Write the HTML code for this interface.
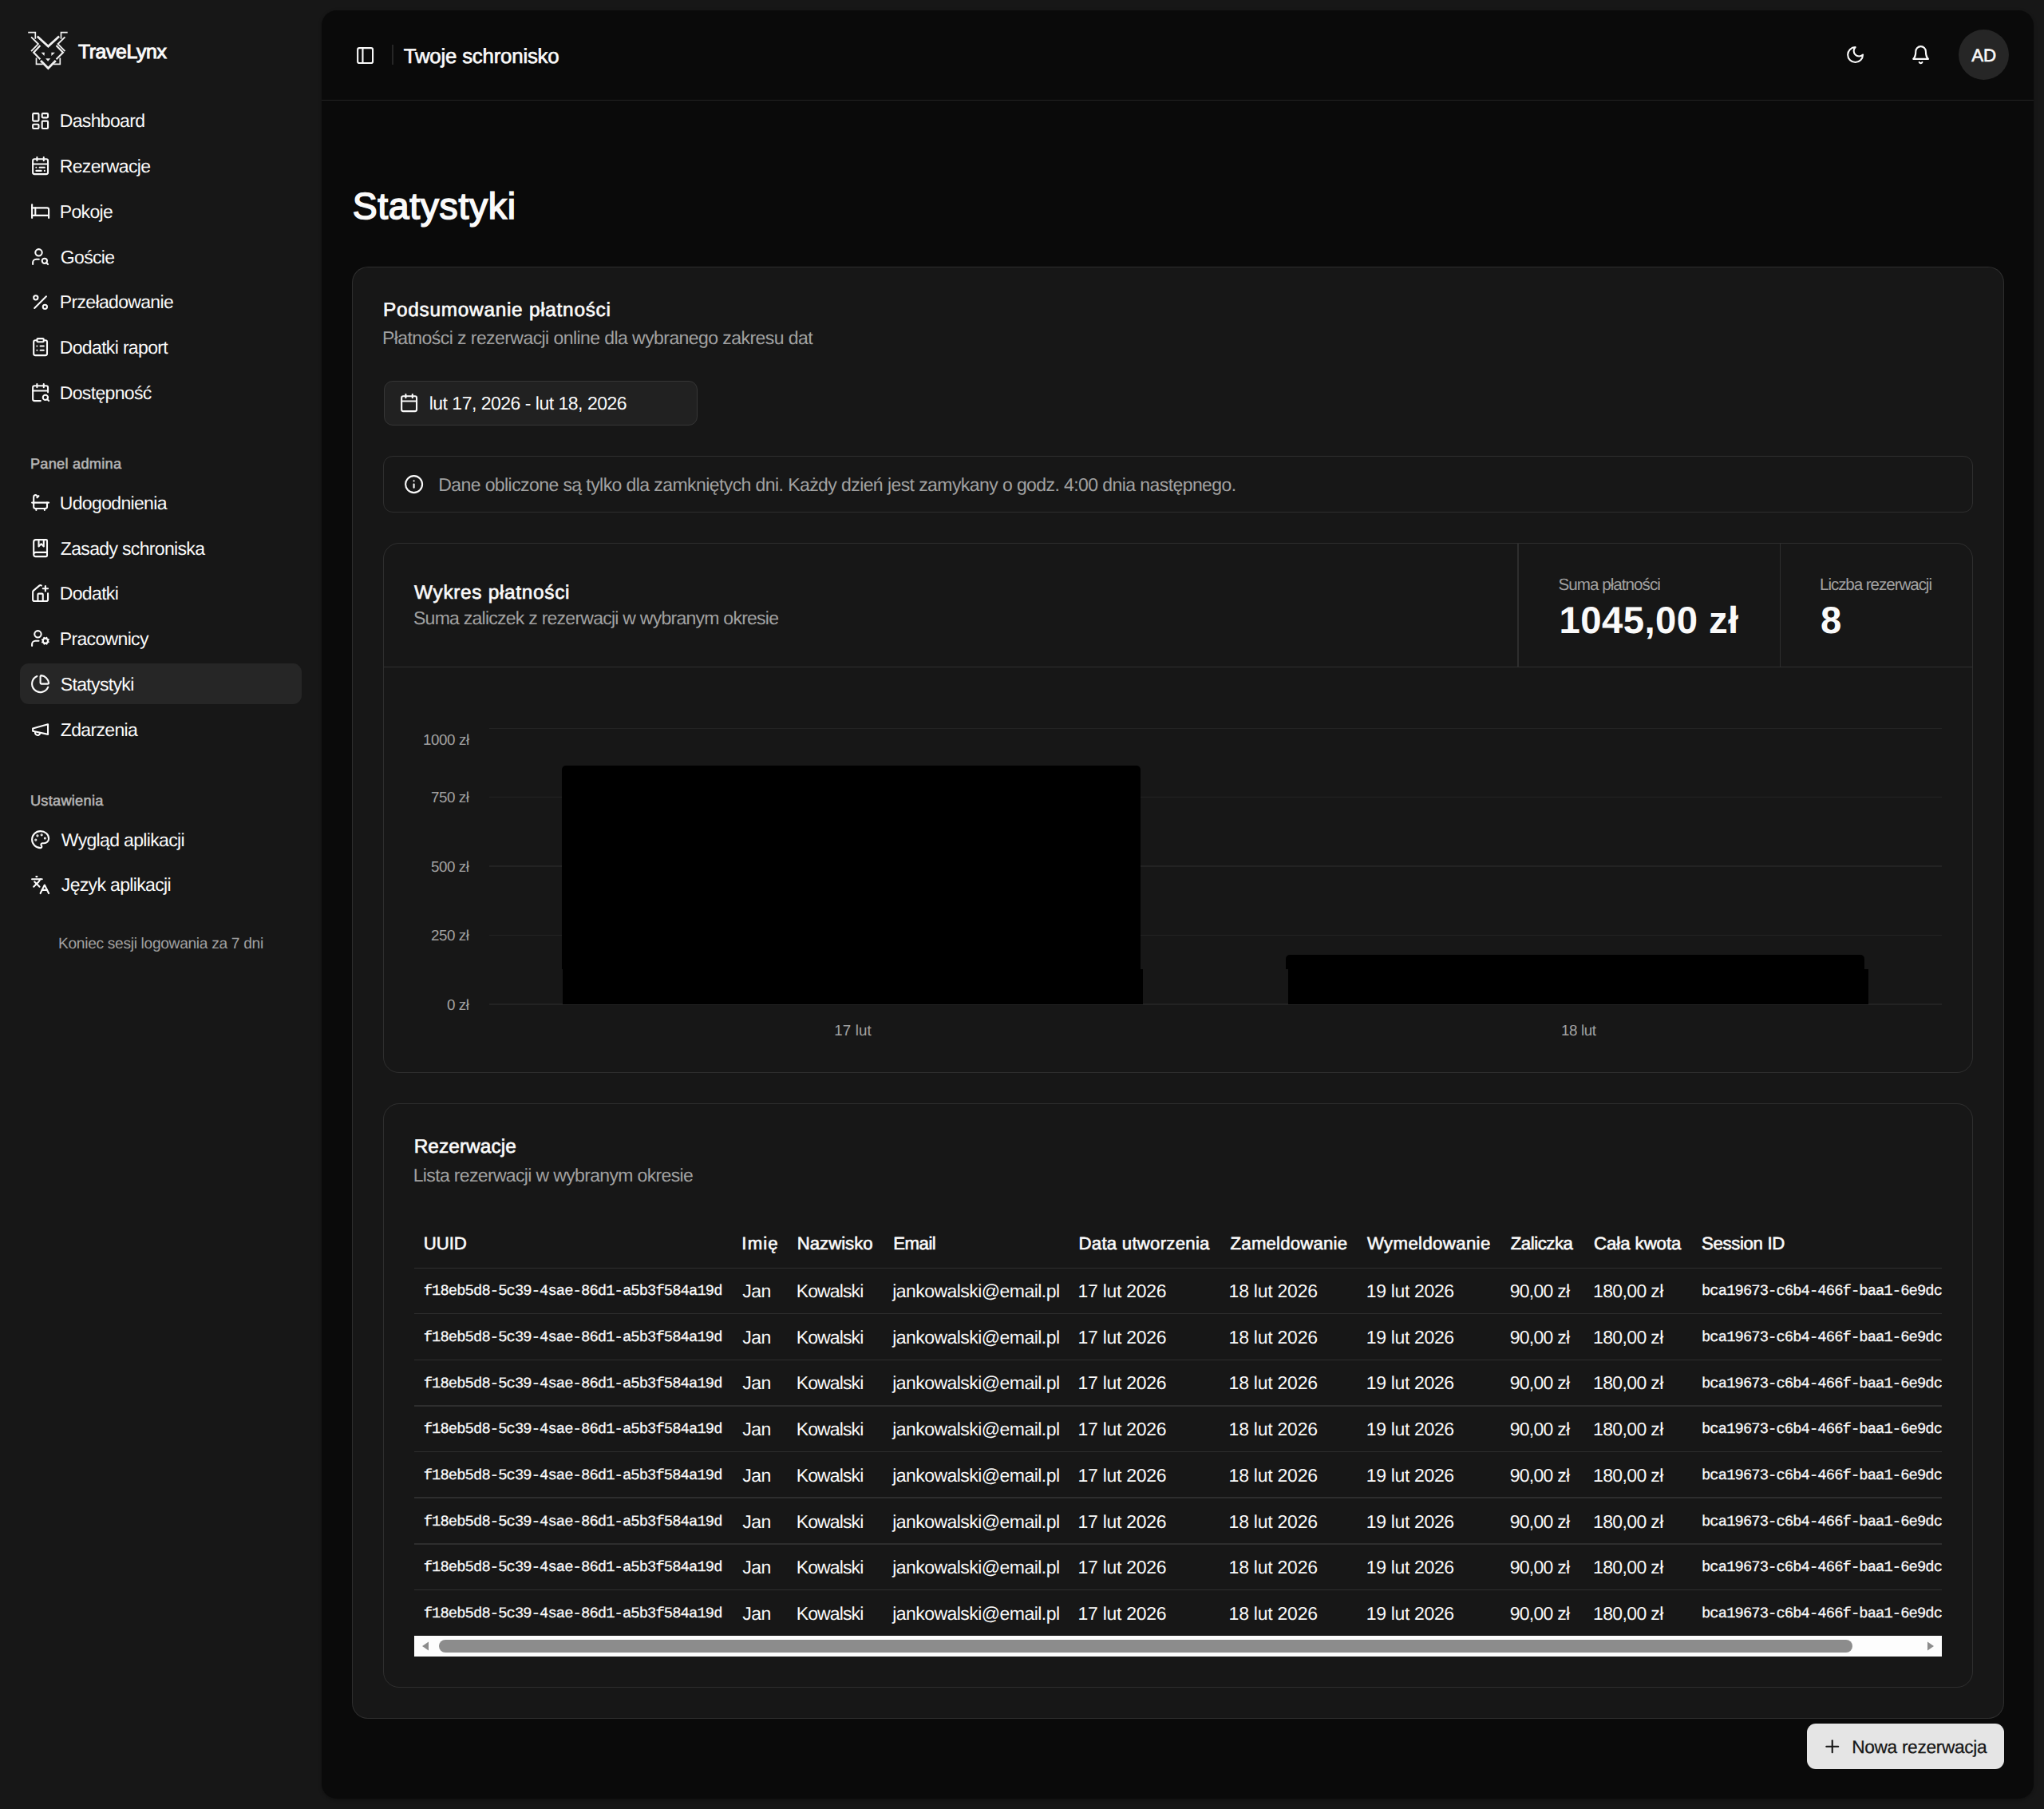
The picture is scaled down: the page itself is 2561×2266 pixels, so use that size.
<!DOCTYPE html>
<html lang="pl"><head><meta charset="utf-8"><title>Statystyki</title><style>
html,body{margin:0;padding:0}
body{width:2561px;height:2266px;background:#171717;position:relative;overflow:hidden;font-family:"Liberation Sans",sans-serif}
.b{position:absolute}
.ic{position:absolute;overflow:visible}
.t{position:absolute;white-space:nowrap;text-rendering:geometricPrecision}
.clipwrap{position:absolute;left:518.7px;top:1500px;width:1914.3px;height:600px;overflow:hidden}
</style></head>
<body>
<div class="b" style="left:403px;top:13px;width:2145.00px;height:2239.50px;background:#0a0a0a;border-radius:19px;box-shadow:0 1.5px 4px rgba(0,0,0,.3)"></div>
<div class="b" style="left:403px;top:124.5px;width:2145.00px;height:1.50px;background:#232323"></div>
<div class="b" style="left:491px;top:56px;width:2.00px;height:25.00px;background:#262626"></div>
<svg class="ic" style="left:445.15px;top:56.95px;width:25.2px;height:25.2px;color:#fafafa" viewBox="0 0 24 24" fill="none" stroke="currentColor" stroke-width="2" stroke-linecap="round" stroke-linejoin="round"><rect width="18" height="18" x="3" y="3" rx="2"/><path d="M9 3v18"/></svg>
<svg class="ic" style="left:2311.90px;top:55.60px;width:25.2px;height:25.2px;color:#fafafa" viewBox="0 0 24 24" fill="none" stroke="currentColor" stroke-width="2" stroke-linecap="round" stroke-linejoin="round"><path d="M12 3a6 6 0 0 0 9 9 9 9 0 1 1-9-9Z"/></svg>
<svg class="ic" style="left:2393.90px;top:55.75px;width:25.2px;height:25.2px;color:#fafafa" viewBox="0 0 24 24" fill="none" stroke="currentColor" stroke-width="2" stroke-linecap="round" stroke-linejoin="round"><path d="M6 8a6 6 0 0 1 12 0c0 7 3 9 3 9H3s3-2 3-9"/><path d="M10.3 21a1.94 1.94 0 0 0 3.4 0"/></svg>
<div class="b" style="left:2454px;top:37px;width:63.00px;height:63.00px;background:#262626;border-radius:50%"></div>
<div class="b" style="left:25px;top:831px;width:353.00px;height:51.00px;background:#262626;border-radius:11px"></div>
<svg class="ic" style="left:37.90px;top:138.90px;width:25.2px;height:25.2px;color:#fafafa" viewBox="0 0 24 24" fill="none" stroke="currentColor" stroke-width="2" stroke-linecap="round" stroke-linejoin="round"><rect width="7" height="9" x="3" y="3" rx="1"/><rect width="7" height="5" x="14" y="3" rx="1"/><rect width="7" height="9" x="14" y="12" rx="1"/><rect width="7" height="5" x="3" y="16" rx="1"/></svg>
<svg class="ic" style="left:37.90px;top:194.95px;width:25.2px;height:25.2px;color:#fafafa" viewBox="0 0 24 24" fill="none" stroke="currentColor" stroke-width="2" stroke-linecap="round" stroke-linejoin="round"><rect width="18" height="18" x="3" y="4" rx="2"/><path d="M16 2v4"/><path d="M3 10h18"/><path d="M8 2v4"/><path d="M17 14h-6"/><path d="M13 18H7"/><path d="M7 14h.01"/><path d="M17 18h.01"/></svg>
<svg class="ic" style="left:37.90px;top:251.80px;width:25.2px;height:25.2px;color:#fafafa" viewBox="0 0 24 24" fill="none" stroke="currentColor" stroke-width="2" stroke-linecap="round" stroke-linejoin="round"><path d="M2 4v16"/><path d="M2 8h18a2 2 0 0 1 2 2v10"/><path d="M2 17h20"/><path d="M6 8v9"/></svg>
<svg class="ic" style="left:37.90px;top:308.65px;width:25.2px;height:25.2px;color:#fafafa" viewBox="0 0 24 24" fill="none" stroke="currentColor" stroke-width="2" stroke-linecap="round" stroke-linejoin="round"><circle cx="10" cy="7" r="4"/><path d="M10.3 15H7a4 4 0 0 0-4 4v2"/><circle cx="17" cy="17" r="3"/><path d="m21 21-1.9-1.9"/></svg>
<svg class="ic" style="left:37.90px;top:365.50px;width:25.2px;height:25.2px;color:#fafafa" viewBox="0 0 24 24" fill="none" stroke="currentColor" stroke-width="2" stroke-linecap="round" stroke-linejoin="round"><line x1="19" x2="5" y1="5" y2="19"/><circle cx="6.5" cy="6.5" r="2.5"/><circle cx="17.5" cy="17.5" r="2.5"/></svg>
<svg class="ic" style="left:37.90px;top:422.35px;width:25.2px;height:25.2px;color:#fafafa" viewBox="0 0 24 24" fill="none" stroke="currentColor" stroke-width="2" stroke-linecap="round" stroke-linejoin="round"><rect width="8" height="4" x="8" y="2" rx="1" ry="1"/><path d="M16 4h2a2 2 0 0 1 2 2v14a2 2 0 0 1-2 2H6a2 2 0 0 1-2-2V6a2 2 0 0 1 2-2h2"/><path d="M12 11h4"/><path d="M12 16h4"/><path d="M8 11h.01"/><path d="M8 16h.01"/></svg>
<svg class="ic" style="left:37.90px;top:479.20px;width:25.2px;height:25.2px;color:#fafafa" viewBox="0 0 24 24" fill="none" stroke="currentColor" stroke-width="2" stroke-linecap="round" stroke-linejoin="round"><path d="M16 2v4"/><path d="M21 11.75V6a2 2 0 0 0-2-2H5a2 2 0 0 0-2 2v14a2 2 0 0 0 2 2h7.25"/><path d="m22 22-1.875-1.875"/><path d="M3 10h18"/><path d="M8 2v4"/><circle cx="18" cy="18" r="3"/></svg>
<svg class="ic" style="left:37.90px;top:616.70px;width:25.2px;height:25.2px;color:#fafafa" viewBox="0 0 24 24" fill="none" stroke="currentColor" stroke-width="2" stroke-linecap="round" stroke-linejoin="round"><path d="M10 4 8 6"/><path d="M17 19v2"/><path d="M2 12h20"/><path d="M7 19v2"/><path d="M9 5 7.621 3.621A2.121 2.121 0 0 0 4 5v12a2 2 0 0 0 2 2h12a2 2 0 0 0 2-2v-5"/></svg>
<svg class="ic" style="left:37.90px;top:674.35px;width:25.2px;height:25.2px;color:#fafafa" viewBox="0 0 24 24" fill="none" stroke="currentColor" stroke-width="2" stroke-linecap="round" stroke-linejoin="round"><path d="M10 2v8l3-3 3 3V2"/><path d="M4 19.5v-15A2.5 2.5 0 0 1 6.5 2H19a1 1 0 0 1 1 1v18a1 1 0 0 1-1 1H6.5a1 1 0 0 1 0-5H20"/></svg>
<svg class="ic" style="left:37.90px;top:731.20px;width:25.2px;height:25.2px;color:#fafafa" viewBox="0 0 24 24" fill="none" stroke="currentColor" stroke-width="2" stroke-linecap="round" stroke-linejoin="round"><path d="M13.22 2.416a2 2 0 0 0-2.511.057l-7 5.999A2 2 0 0 0 3 10v9a2 2 0 0 0 2 2h14a2 2 0 0 0 2-2v-7.354"/><path d="M15 21v-8a1 1 0 0 0-1-1h-4a1 1 0 0 0-1 1v8"/><path d="M15 6h6"/><path d="M18 3v6"/></svg>
<svg class="ic" style="left:37.90px;top:787.25px;width:25.2px;height:25.2px;color:#fafafa" viewBox="0 0 24 24" fill="none" stroke="currentColor" stroke-width="2" stroke-linecap="round" stroke-linejoin="round"><circle cx="18" cy="15" r="3"/><circle cx="9" cy="7" r="4"/><path d="M10 15H6a4 4 0 0 0-4 4v2"/><path d="m21.7 16.4-.9-.3"/><path d="m15.2 13.9-.9-.3"/><path d="m16.6 18.7.3-.9"/><path d="m19.1 12.2.3-.9"/><path d="m19.6 18.7-.4-1"/><path d="m16.8 12.3-.4-1"/><path d="m14.3 16.6 1-.4"/><path d="m20.7 13.8 1-.4"/></svg>
<svg class="ic" style="left:37.90px;top:844.10px;width:25.2px;height:25.2px;color:#fafafa" viewBox="0 0 24 24" fill="none" stroke="currentColor" stroke-width="2" stroke-linecap="round" stroke-linejoin="round"><path d="M21 12c.552 0 1.005-.449.95-.998a10 10 0 0 0-8.953-8.951c-.55-.055-.998.398-.998.95v8a1 1 0 0 0 1 1z"/><path d="M21.21 15.89A10 10 0 1 1 8 2.83"/></svg>
<svg class="ic" style="left:37.90px;top:900.95px;width:25.2px;height:25.2px;color:#fafafa" viewBox="0 0 24 24" fill="none" stroke="currentColor" stroke-width="2" stroke-linecap="round" stroke-linejoin="round"><path d="m3 11 18-5v12L3 14v-3z"/><path d="M11.6 16.8a3 3 0 1 1-5.8-1.6"/></svg>
<svg class="ic" style="left:37.90px;top:1039.30px;width:25.2px;height:25.2px;color:#fafafa" viewBox="0 0 24 24" fill="none" stroke="currentColor" stroke-width="2" stroke-linecap="round" stroke-linejoin="round"><circle cx="13.5" cy="6.5" r=".5" fill="currentColor"/><circle cx="17.5" cy="10.5" r=".5" fill="currentColor"/><circle cx="8.5" cy="7.5" r=".5" fill="currentColor"/><circle cx="6.5" cy="12.5" r=".5" fill="currentColor"/><path d="M12 2C6.5 2 2 6.5 2 12s4.5 10 10 10c.926 0 1.648-.746 1.648-1.688 0-.437-.18-.835-.437-1.125-.29-.289-.438-.652-.438-1.125a1.64 1.64 0 0 1 1.668-1.668h1.996c3.051 0 5.555-2.503 5.555-5.554C21.965 6.012 17.461 2 12 2z"/></svg>
<svg class="ic" style="left:37.90px;top:1096.20px;width:25.2px;height:25.2px;color:#fafafa" viewBox="0 0 24 24" fill="none" stroke="currentColor" stroke-width="2" stroke-linecap="round" stroke-linejoin="round"><path d="m5 8 6 6"/><path d="m4 14 6-6 2-3"/><path d="M2 5h12"/><path d="M7 2h1"/><path d="m22 22-5-10-5 10"/><path d="M14 18h6"/></svg>
<svg class="ic" style="left:30px;top:35px;width:60px;height:55px" viewBox="0 0 60 55" fill="none" stroke="#f0f0f0" stroke-linecap="butt" stroke-linejoin="miter">
<path d="M5.2 5.6H14.3V13.7" stroke-width="1.7"/><path d="M54.7 5.6H46.5V13.7" stroke-width="1.7"/>
<path d="M16.7 10.6L30.4 23.1L44.1 10.6" stroke-width="2.7"/>
<path d="M9.1 11.3L17.9 20.1L9.1 29.2" stroke-width="1.9"/><path d="M51.4 11.3L42.6 20.1L51.4 29.2" stroke-width="1.9"/>
<path d="M20.4 21.9L12.2 30.7L20.4 39.2" stroke-width="2.2"/><path d="M40.5 21.9L49 30.7L40.5 39.2" stroke-width="2.2"/>
<path d="M21 41L30.4 50.5L39.8 41" stroke-width="2.8"/>
<path d="M15.5 37.4V45.3H23.7" stroke-width="1.7"/><path d="M45.3 37.4V45.3H37.1" stroke-width="1.7"/>
<path d="M21.6 30.7H25.9L25.5 35Z" fill="#f0f0f0" stroke="none"/><path d="M34.4 30.7H38.9L34.4 35Z" fill="#f0f0f0" stroke="none"/>
<path d="M27.1 38.3H33.2L30.1 41.7Z" fill="#f0f0f0" stroke="none"/>
</svg>
<div class="b" style="left:441px;top:334px;width:2070.00px;height:1819.00px;background:#171717;border:1.5px solid rgba(255,255,255,0.10);border-radius:20px;box-sizing:border-box"></div>
<div class="b" style="left:480.6px;top:477.2px;width:393.10px;height:55.40px;background:#212121;border:1.5px solid #363636;border-radius:11px;box-sizing:border-box"></div>
<svg class="ic" style="left:499.80px;top:492.00px;width:25.2px;height:25.2px;color:#fafafa" viewBox="0 0 24 24" fill="none" stroke="currentColor" stroke-width="2" stroke-linecap="round" stroke-linejoin="round"><rect width="18" height="18" x="3" y="4" rx="2"/><path d="M16 2v4"/><path d="M8 2v4"/><path d="M3 10h18"/></svg>
<div class="b" style="left:480px;top:571px;width:1992.00px;height:71.00px;border:1.5px solid rgba(255,255,255,0.10);border-radius:12px;box-sizing:border-box"></div>
<svg class="ic" style="left:505.90px;top:593.90px;width:25.2px;height:25.2px;color:#fafafa" viewBox="0 0 24 24" fill="none" stroke="currentColor" stroke-width="2" stroke-linecap="round" stroke-linejoin="round"><circle cx="12" cy="12" r="10"/><path d="M12 16v-4"/><path d="M12 8h.01"/></svg>
<div class="b" style="left:480px;top:680px;width:1992.00px;height:664.00px;border:1.5px solid rgba(255,255,255,0.10);border-radius:20px;box-sizing:border-box"></div>
<div class="b" style="left:480px;top:834.5px;width:1992.00px;height:1.50px;background:#2e2e2e"></div>
<div class="b" style="left:1901.2px;top:680px;width:1.50px;height:155.00px;background:#2e2e2e"></div>
<div class="b" style="left:2229.7px;top:680px;width:1.50px;height:155.00px;background:#2e2e2e"></div>
<div class="b" style="left:613.3px;top:911.7px;width:1819.70px;height:1.60px;background:#232323"></div>
<div class="b" style="left:613.3px;top:997.5px;width:1819.70px;height:1.60px;background:#232323"></div>
<div class="b" style="left:613.3px;top:1084.2px;width:1819.70px;height:1.60px;background:#232323"></div>
<div class="b" style="left:613.3px;top:1170.9px;width:1819.70px;height:1.60px;background:#232323"></div>
<div class="b" style="left:613.3px;top:1257.3px;width:1819.70px;height:1.60px;background:#232323"></div>
<div class="b" style="left:704px;top:959px;width:724.80px;height:255.00px;background:#000;border-radius:5px 5px 0 0"></div>
<div class="b" style="left:705px;top:1214px;width:727.00px;height:44.00px;background:#000"></div>
<div class="b" style="left:1611px;top:1196px;width:724.60px;height:18.00px;background:#000;border-radius:5px 5px 0 0"></div>
<div class="b" style="left:1614.4px;top:1214px;width:727.10px;height:44.00px;background:#000"></div>
<div class="b" style="left:480px;top:1382px;width:1992.00px;height:731.50px;border:1.5px solid rgba(255,255,255,0.10);border-radius:20px;box-sizing:border-box"></div>
<div class="b" style="left:518.7px;top:1587.65px;width:1914.30px;height:1.50px;background:#2e2e2e"></div>
<div class="b" style="left:518.7px;top:1644.85px;width:1914.30px;height:1.50px;background:#2e2e2e"></div>
<div class="b" style="left:518.7px;top:1702.51px;width:1914.30px;height:1.50px;background:#2e2e2e"></div>
<div class="b" style="left:518.7px;top:1760.1699999999998px;width:1914.30px;height:1.50px;background:#2e2e2e"></div>
<div class="b" style="left:518.7px;top:1817.83px;width:1914.30px;height:1.50px;background:#2e2e2e"></div>
<div class="b" style="left:518.7px;top:1875.4899999999998px;width:1914.30px;height:1.50px;background:#2e2e2e"></div>
<div class="b" style="left:518.7px;top:1933.1499999999999px;width:1914.30px;height:1.50px;background:#2e2e2e"></div>
<div class="b" style="left:518.7px;top:1990.81px;width:1914.30px;height:1.50px;background:#2e2e2e"></div>
<div class="b" style="left:518.7px;top:2048.5px;width:1914.30px;height:26.50px;background:#fdfdfd"></div>
<div class="b" style="left:550.4px;top:2054px;width:1770.60px;height:15.60px;background:#8c8c8c;border-radius:8px"></div>
<svg class="ic" style="left:526px;top:2054px;width:14px;height:16px" viewBox="0 0 14 16"><path d="M11 2.5L3 8L11 13.5Z" fill="#8c8c8c"/></svg>
<svg class="ic" style="left:2412px;top:2054px;width:14px;height:16px" viewBox="0 0 14 16"><path d="M3 2.5L11 8L3 13.5Z" fill="#8c8c8c"/></svg>
<div class="b" style="left:2264px;top:2159px;width:247.00px;height:57.00px;background:#e5e5e5;border-radius:11px"></div>
<svg class="ic" style="left:2282.75px;top:2174.85px;width:25.5px;height:25.5px;color:#171717" viewBox="0 0 24 24" fill="none" stroke="currentColor" stroke-width="2" stroke-linecap="round" stroke-linejoin="round"><path d="M5 12h14"/><path d="M12 5v14"/></svg>
<div class="t" style="left:97.90px;top:54px;font-family:'Liberation Sans', sans-serif;font-size:24.8px;line-height:24.8px;font-weight:400;letter-spacing:-0.375px;color:#fafafa;-webkit-text-stroke:1.0px #fafafa">TraveLynx</div>
<div class="t" style="left:74.80px;top:140px;font-family:'Liberation Sans', sans-serif;font-size:23.0px;line-height:23.0px;font-weight:400;letter-spacing:-0.662px;color:#fafafa">Dashboard</div>
<div class="t" style="left:74.80px;top:197px;font-family:'Liberation Sans', sans-serif;font-size:23.0px;line-height:23.0px;font-weight:400;letter-spacing:-0.662px;color:#fafafa">Rezerwacje</div>
<div class="t" style="left:74.80px;top:254px;font-family:'Liberation Sans', sans-serif;font-size:23.0px;line-height:23.0px;font-weight:400;letter-spacing:-0.662px;color:#fafafa">Pokoje</div>
<div class="t" style="left:75.80px;top:311px;font-family:'Liberation Sans', sans-serif;font-size:23.0px;line-height:23.0px;font-weight:400;letter-spacing:-0.662px;color:#fafafa">Goście</div>
<div class="t" style="left:74.80px;top:367px;font-family:'Liberation Sans', sans-serif;font-size:23.0px;line-height:23.0px;font-weight:400;letter-spacing:-0.662px;color:#fafafa">Przeładowanie</div>
<div class="t" style="left:74.80px;top:424px;font-family:'Liberation Sans', sans-serif;font-size:23.0px;line-height:23.0px;font-weight:400;letter-spacing:-0.662px;color:#fafafa">Dodatki raport</div>
<div class="t" style="left:74.80px;top:481px;font-family:'Liberation Sans', sans-serif;font-size:23.0px;line-height:23.0px;font-weight:400;letter-spacing:-0.662px;color:#fafafa">Dostępność</div>
<div class="t" style="left:37.90px;top:572px;font-family:'Liberation Sans', sans-serif;font-size:18.2px;line-height:18.2px;font-weight:400;letter-spacing:0.273px;color:#b6b6b6;-webkit-text-stroke:0.55px #b6b6b6">Panel admina</div>
<div class="t" style="left:74.80px;top:619px;font-family:'Liberation Sans', sans-serif;font-size:23.0px;line-height:23.0px;font-weight:400;letter-spacing:-0.662px;color:#fafafa">Udogodnienia</div>
<div class="t" style="left:75.80px;top:676px;font-family:'Liberation Sans', sans-serif;font-size:23.0px;line-height:23.0px;font-weight:400;letter-spacing:-0.662px;color:#fafafa">Zasady schroniska</div>
<div class="t" style="left:74.80px;top:732px;font-family:'Liberation Sans', sans-serif;font-size:23.0px;line-height:23.0px;font-weight:400;letter-spacing:-0.662px;color:#fafafa">Dodatki</div>
<div class="t" style="left:74.80px;top:789px;font-family:'Liberation Sans', sans-serif;font-size:23.0px;line-height:23.0px;font-weight:400;letter-spacing:-0.662px;color:#fafafa">Pracownicy</div>
<div class="t" style="left:75.80px;top:846px;font-family:'Liberation Sans', sans-serif;font-size:23.0px;line-height:23.0px;font-weight:400;letter-spacing:-0.662px;color:#fafafa">Statystyki</div>
<div class="t" style="left:75.80px;top:903px;font-family:'Liberation Sans', sans-serif;font-size:23.0px;line-height:23.0px;font-weight:400;letter-spacing:-0.662px;color:#fafafa">Zdarzenia</div>
<div class="t" style="left:37.90px;top:994px;font-family:'Liberation Sans', sans-serif;font-size:18.2px;line-height:18.2px;font-weight:400;letter-spacing:0.273px;color:#b6b6b6;-webkit-text-stroke:0.55px #b6b6b6">Ustawienia</div>
<div class="t" style="left:76.80px;top:1041px;font-family:'Liberation Sans', sans-serif;font-size:23.0px;line-height:23.0px;font-weight:400;letter-spacing:-0.662px;color:#fafafa">Wygląd aplikacji</div>
<div class="t" style="left:76.80px;top:1097px;font-family:'Liberation Sans', sans-serif;font-size:23.0px;line-height:23.0px;font-weight:400;letter-spacing:-0.662px;color:#fafafa">Język aplikacji</div>
<div class="t" style="left:73.00px;top:1173px;font-family:'Liberation Sans', sans-serif;font-size:19.2px;line-height:19.2px;font-weight:400;letter-spacing:-0.317px;color:#a1a1a1">Koniec sesji logowania za 7 dni</div>
<div class="t" style="left:505.80px;top:59px;font-family:'Liberation Sans', sans-serif;font-size:25.8px;line-height:25.8px;font-weight:400;letter-spacing:-0.2px;color:#fafafa;-webkit-text-stroke:0.65px #fafafa">Twoje schronisko</div>
<div class="t" style="left:2470.30px;top:59px;font-family:'Liberation Sans', sans-serif;font-size:22.3px;line-height:22.3px;font-weight:400;letter-spacing:-0.1px;color:#fafafa;-webkit-text-stroke:0.6px #fafafa">AD</div>
<div class="t" style="left:441.70px;top:235px;font-family:'Liberation Sans', sans-serif;font-size:46.4px;line-height:46.4px;font-weight:400;letter-spacing:0.644px;color:#fafafa;-webkit-text-stroke:1.6px #fafafa">Statystyki</div>
<div class="t" style="left:480.00px;top:377px;font-family:'Liberation Sans', sans-serif;font-size:24.4px;line-height:24.4px;font-weight:400;letter-spacing:0.719px;color:#fafafa;-webkit-text-stroke:0.65px #fafafa">Podsumowanie płatności</div>
<div class="t" style="left:479.00px;top:412px;font-family:'Liberation Sans', sans-serif;font-size:23.0px;line-height:23.0px;font-weight:400;letter-spacing:-0.567px;color:#a1a1a1">Płatności z rezerwacji online dla wybranego zakresu dat</div>
<div class="t" style="left:537.70px;top:494px;font-family:'Liberation Sans', sans-serif;font-size:23.0px;line-height:23.0px;font-weight:400;letter-spacing:-0.5px;color:#fafafa">lut 17, 2026 - lut 18, 2026</div>
<div class="t" style="left:549.20px;top:596px;font-family:'Liberation Sans', sans-serif;font-size:23.0px;line-height:23.0px;font-weight:400;letter-spacing:-0.58px;color:#a1a1a1">Dane obliczone są tylko dla zamkniętych dni. Każdy dzień jest zamykany o godz. 4:00 dnia następnego.</div>
<div class="t" style="left:519.00px;top:731px;font-family:'Liberation Sans', sans-serif;font-size:24.4px;line-height:24.4px;font-weight:400;letter-spacing:0.693px;color:#fafafa;-webkit-text-stroke:0.65px #fafafa">Wykres płatności</div>
<div class="t" style="left:518.00px;top:763px;font-family:'Liberation Sans', sans-serif;font-size:23.0px;line-height:23.0px;font-weight:400;letter-spacing:-0.745px;color:#a1a1a1">Suma zaliczek z rezerwacji w wybranym okresie</div>
<div class="t" style="left:1952.50px;top:723px;font-family:'Liberation Sans', sans-serif;font-size:20.6px;line-height:20.6px;font-weight:400;letter-spacing:-0.962px;color:#a1a1a1">Suma płatności</div>
<div class="t" style="left:2280.00px;top:723px;font-family:'Liberation Sans', sans-serif;font-size:20.6px;line-height:20.6px;font-weight:400;letter-spacing:-1.062px;color:#a1a1a1">Liczba rezerwacji</div>
<div class="t" style="left:1953.60px;top:754px;font-family:'Liberation Sans', sans-serif;font-size:47.3px;line-height:47.3px;font-weight:700;letter-spacing:0.4px;color:#fafafa">1045,00 zł</div>
<div class="t" style="left:2281.00px;top:754px;font-family:'Liberation Sans', sans-serif;font-size:47.3px;line-height:47.3px;font-weight:700;letter-spacing:0.4px;color:#fafafa">8</div>
<div class="t" style="left:529.90px;top:918px;font-family:'Liberation Sans', sans-serif;font-size:18.8px;line-height:18.8px;font-weight:400;letter-spacing:-0.4px;color:#a1a1a1">1000 zł</div>
<div class="t" style="left:539.90px;top:990px;font-family:'Liberation Sans', sans-serif;font-size:18.8px;line-height:18.8px;font-weight:400;letter-spacing:-0.4px;color:#a1a1a1">750 zł</div>
<div class="t" style="left:539.90px;top:1077px;font-family:'Liberation Sans', sans-serif;font-size:18.8px;line-height:18.8px;font-weight:400;letter-spacing:-0.4px;color:#a1a1a1">500 zł</div>
<div class="t" style="left:539.90px;top:1163px;font-family:'Liberation Sans', sans-serif;font-size:18.8px;line-height:18.8px;font-weight:400;letter-spacing:-0.4px;color:#a1a1a1">250 zł</div>
<div class="t" style="left:559.90px;top:1250px;font-family:'Liberation Sans', sans-serif;font-size:18.8px;line-height:18.8px;font-weight:400;letter-spacing:-0.4px;color:#a1a1a1">0 zł</div>
<div class="t" style="left:1045.30px;top:1282px;font-family:'Liberation Sans', sans-serif;font-size:18.8px;line-height:18.8px;font-weight:400;letter-spacing:0.08px;color:#a1a1a1">17 lut</div>
<div class="t" style="left:1956.00px;top:1282px;font-family:'Liberation Sans', sans-serif;font-size:18.8px;line-height:18.8px;font-weight:400;letter-spacing:-0.4px;color:#a1a1a1">18 lut</div>
<div class="t" style="left:518.70px;top:1425px;font-family:'Liberation Sans', sans-serif;font-size:24.4px;line-height:24.4px;font-weight:400;letter-spacing:0.067px;color:#fafafa;-webkit-text-stroke:0.65px #fafafa">Rezerwacje</div>
<div class="t" style="left:517.70px;top:1461px;font-family:'Liberation Sans', sans-serif;font-size:23.0px;line-height:23.0px;font-weight:400;letter-spacing:-0.65px;color:#a1a1a1">Lista rezerwacji w wybranym okresie</div>
<div class="t" style="left:530.70px;top:1547px;font-family:'Liberation Sans', sans-serif;font-size:22.2px;line-height:22.2px;font-weight:400;letter-spacing:-0.033px;color:#fafafa;-webkit-text-stroke:0.6px #fafafa">UUID</div>
<div class="t" style="left:929.30px;top:1547px;font-family:'Liberation Sans', sans-serif;font-size:22.2px;line-height:22.2px;font-weight:400;letter-spacing:1.167px;color:#fafafa;-webkit-text-stroke:0.6px #fafafa">Imię</div>
<div class="t" style="left:998.70px;top:1547px;font-family:'Liberation Sans', sans-serif;font-size:22.2px;line-height:22.2px;font-weight:400;letter-spacing:0.0px;color:#fafafa;-webkit-text-stroke:0.6px #fafafa">Nazwisko</div>
<div class="t" style="left:1119.30px;top:1547px;font-family:'Liberation Sans', sans-serif;font-size:22.2px;line-height:22.2px;font-weight:400;letter-spacing:-0.5px;color:#fafafa;-webkit-text-stroke:0.6px #fafafa">Email</div>
<div class="t" style="left:1351.50px;top:1547px;font-family:'Liberation Sans', sans-serif;font-size:22.2px;line-height:22.2px;font-weight:400;letter-spacing:0.257px;color:#fafafa;-webkit-text-stroke:0.6px #fafafa">Data utworzenia</div>
<div class="t" style="left:1541.60px;top:1547px;font-family:'Liberation Sans', sans-serif;font-size:22.2px;line-height:22.2px;font-weight:400;letter-spacing:0.2px;color:#fafafa;-webkit-text-stroke:0.6px #fafafa">Zameldowanie</div>
<div class="t" style="left:1713.00px;top:1547px;font-family:'Liberation Sans', sans-serif;font-size:22.2px;line-height:22.2px;font-weight:400;letter-spacing:0.364px;color:#fafafa;-webkit-text-stroke:0.6px #fafafa">Wymeldowanie</div>
<div class="t" style="left:1892.70px;top:1547px;font-family:'Liberation Sans', sans-serif;font-size:22.2px;line-height:22.2px;font-weight:400;letter-spacing:-0.443px;color:#fafafa;-webkit-text-stroke:0.6px #fafafa">Zaliczka</div>
<div class="t" style="left:1997.00px;top:1547px;font-family:'Liberation Sans', sans-serif;font-size:22.2px;line-height:22.2px;font-weight:400;letter-spacing:-0.044px;color:#fafafa;-webkit-text-stroke:0.6px #fafafa">Cała kwota</div>
<div class="t" style="left:2132.00px;top:1547px;font-family:'Liberation Sans', sans-serif;font-size:22.2px;line-height:22.2px;font-weight:400;letter-spacing:-0.333px;color:#fafafa;-webkit-text-stroke:0.6px #fafafa">Session ID</div>
<div class="t" style="left:530.70px;top:1608px;font-family:'Liberation Mono', monospace;font-size:18.8px;line-height:18.8px;font-weight:400;letter-spacing:-0.886px;color:#fafafa;-webkit-text-stroke:0.3px #fafafa">f18eb5d8-5c39-4sae-86d1-a5b3f584a19d</div>
<div class="t" style="left:930.30px;top:1606px;font-family:'Liberation Sans', sans-serif;font-size:23.0px;line-height:23.0px;font-weight:400;letter-spacing:-0.547px;color:#fafafa">Jan</div>
<div class="t" style="left:997.70px;top:1606px;font-family:'Liberation Sans', sans-serif;font-size:23.0px;line-height:23.0px;font-weight:400;letter-spacing:-0.886px;color:#fafafa">Kowalski</div>
<div class="t" style="left:1118.20px;top:1606px;font-family:'Liberation Sans', sans-serif;font-size:23.0px;line-height:23.0px;font-weight:400;letter-spacing:-0.547px;color:#fafafa">jankowalski@email.pl</div>
<div class="t" style="left:1350.50px;top:1606px;font-family:'Liberation Sans', sans-serif;font-size:23.0px;line-height:23.0px;font-weight:400;letter-spacing:-0.27px;color:#fafafa">17 lut 2026</div>
<div class="t" style="left:1539.60px;top:1606px;font-family:'Liberation Sans', sans-serif;font-size:23.0px;line-height:23.0px;font-weight:400;letter-spacing:-0.24px;color:#fafafa">18 lut 2026</div>
<div class="t" style="left:1711.80px;top:1606px;font-family:'Liberation Sans', sans-serif;font-size:23.0px;line-height:23.0px;font-weight:400;letter-spacing:-0.35px;color:#fafafa">19 lut 2026</div>
<div class="t" style="left:1891.70px;top:1606px;font-family:'Liberation Sans', sans-serif;font-size:23.0px;line-height:23.0px;font-weight:400;letter-spacing:-0.729px;color:#fafafa">90,00 zł</div>
<div class="t" style="left:1996.00px;top:1606px;font-family:'Liberation Sans', sans-serif;font-size:23.0px;line-height:23.0px;font-weight:400;letter-spacing:-0.625px;color:#fafafa">180,00 zł</div>
<div class="t" style="left:530.70px;top:1666px;font-family:'Liberation Mono', monospace;font-size:18.8px;line-height:18.8px;font-weight:400;letter-spacing:-0.886px;color:#fafafa;-webkit-text-stroke:0.3px #fafafa">f18eb5d8-5c39-4sae-86d1-a5b3f584a19d</div>
<div class="t" style="left:930.30px;top:1664px;font-family:'Liberation Sans', sans-serif;font-size:23.0px;line-height:23.0px;font-weight:400;letter-spacing:-0.547px;color:#fafafa">Jan</div>
<div class="t" style="left:997.70px;top:1664px;font-family:'Liberation Sans', sans-serif;font-size:23.0px;line-height:23.0px;font-weight:400;letter-spacing:-0.886px;color:#fafafa">Kowalski</div>
<div class="t" style="left:1118.20px;top:1664px;font-family:'Liberation Sans', sans-serif;font-size:23.0px;line-height:23.0px;font-weight:400;letter-spacing:-0.547px;color:#fafafa">jankowalski@email.pl</div>
<div class="t" style="left:1350.50px;top:1664px;font-family:'Liberation Sans', sans-serif;font-size:23.0px;line-height:23.0px;font-weight:400;letter-spacing:-0.27px;color:#fafafa">17 lut 2026</div>
<div class="t" style="left:1539.60px;top:1664px;font-family:'Liberation Sans', sans-serif;font-size:23.0px;line-height:23.0px;font-weight:400;letter-spacing:-0.24px;color:#fafafa">18 lut 2026</div>
<div class="t" style="left:1711.80px;top:1664px;font-family:'Liberation Sans', sans-serif;font-size:23.0px;line-height:23.0px;font-weight:400;letter-spacing:-0.35px;color:#fafafa">19 lut 2026</div>
<div class="t" style="left:1891.70px;top:1664px;font-family:'Liberation Sans', sans-serif;font-size:23.0px;line-height:23.0px;font-weight:400;letter-spacing:-0.729px;color:#fafafa">90,00 zł</div>
<div class="t" style="left:1996.00px;top:1664px;font-family:'Liberation Sans', sans-serif;font-size:23.0px;line-height:23.0px;font-weight:400;letter-spacing:-0.625px;color:#fafafa">180,00 zł</div>
<div class="t" style="left:530.70px;top:1724px;font-family:'Liberation Mono', monospace;font-size:18.8px;line-height:18.8px;font-weight:400;letter-spacing:-0.886px;color:#fafafa;-webkit-text-stroke:0.3px #fafafa">f18eb5d8-5c39-4sae-86d1-a5b3f584a19d</div>
<div class="t" style="left:930.30px;top:1721px;font-family:'Liberation Sans', sans-serif;font-size:23.0px;line-height:23.0px;font-weight:400;letter-spacing:-0.547px;color:#fafafa">Jan</div>
<div class="t" style="left:997.70px;top:1721px;font-family:'Liberation Sans', sans-serif;font-size:23.0px;line-height:23.0px;font-weight:400;letter-spacing:-0.886px;color:#fafafa">Kowalski</div>
<div class="t" style="left:1118.20px;top:1721px;font-family:'Liberation Sans', sans-serif;font-size:23.0px;line-height:23.0px;font-weight:400;letter-spacing:-0.547px;color:#fafafa">jankowalski@email.pl</div>
<div class="t" style="left:1350.50px;top:1721px;font-family:'Liberation Sans', sans-serif;font-size:23.0px;line-height:23.0px;font-weight:400;letter-spacing:-0.27px;color:#fafafa">17 lut 2026</div>
<div class="t" style="left:1539.60px;top:1721px;font-family:'Liberation Sans', sans-serif;font-size:23.0px;line-height:23.0px;font-weight:400;letter-spacing:-0.24px;color:#fafafa">18 lut 2026</div>
<div class="t" style="left:1711.80px;top:1721px;font-family:'Liberation Sans', sans-serif;font-size:23.0px;line-height:23.0px;font-weight:400;letter-spacing:-0.35px;color:#fafafa">19 lut 2026</div>
<div class="t" style="left:1891.70px;top:1721px;font-family:'Liberation Sans', sans-serif;font-size:23.0px;line-height:23.0px;font-weight:400;letter-spacing:-0.729px;color:#fafafa">90,00 zł</div>
<div class="t" style="left:1996.00px;top:1721px;font-family:'Liberation Sans', sans-serif;font-size:23.0px;line-height:23.0px;font-weight:400;letter-spacing:-0.625px;color:#fafafa">180,00 zł</div>
<div class="t" style="left:530.70px;top:1781px;font-family:'Liberation Mono', monospace;font-size:18.8px;line-height:18.8px;font-weight:400;letter-spacing:-0.886px;color:#fafafa;-webkit-text-stroke:0.3px #fafafa">f18eb5d8-5c39-4sae-86d1-a5b3f584a19d</div>
<div class="t" style="left:930.30px;top:1779px;font-family:'Liberation Sans', sans-serif;font-size:23.0px;line-height:23.0px;font-weight:400;letter-spacing:-0.547px;color:#fafafa">Jan</div>
<div class="t" style="left:997.70px;top:1779px;font-family:'Liberation Sans', sans-serif;font-size:23.0px;line-height:23.0px;font-weight:400;letter-spacing:-0.886px;color:#fafafa">Kowalski</div>
<div class="t" style="left:1118.20px;top:1779px;font-family:'Liberation Sans', sans-serif;font-size:23.0px;line-height:23.0px;font-weight:400;letter-spacing:-0.547px;color:#fafafa">jankowalski@email.pl</div>
<div class="t" style="left:1350.50px;top:1779px;font-family:'Liberation Sans', sans-serif;font-size:23.0px;line-height:23.0px;font-weight:400;letter-spacing:-0.27px;color:#fafafa">17 lut 2026</div>
<div class="t" style="left:1539.60px;top:1779px;font-family:'Liberation Sans', sans-serif;font-size:23.0px;line-height:23.0px;font-weight:400;letter-spacing:-0.24px;color:#fafafa">18 lut 2026</div>
<div class="t" style="left:1711.80px;top:1779px;font-family:'Liberation Sans', sans-serif;font-size:23.0px;line-height:23.0px;font-weight:400;letter-spacing:-0.35px;color:#fafafa">19 lut 2026</div>
<div class="t" style="left:1891.70px;top:1779px;font-family:'Liberation Sans', sans-serif;font-size:23.0px;line-height:23.0px;font-weight:400;letter-spacing:-0.729px;color:#fafafa">90,00 zł</div>
<div class="t" style="left:1996.00px;top:1779px;font-family:'Liberation Sans', sans-serif;font-size:23.0px;line-height:23.0px;font-weight:400;letter-spacing:-0.625px;color:#fafafa">180,00 zł</div>
<div class="t" style="left:530.70px;top:1839px;font-family:'Liberation Mono', monospace;font-size:18.8px;line-height:18.8px;font-weight:400;letter-spacing:-0.886px;color:#fafafa;-webkit-text-stroke:0.3px #fafafa">f18eb5d8-5c39-4sae-86d1-a5b3f584a19d</div>
<div class="t" style="left:930.30px;top:1837px;font-family:'Liberation Sans', sans-serif;font-size:23.0px;line-height:23.0px;font-weight:400;letter-spacing:-0.547px;color:#fafafa">Jan</div>
<div class="t" style="left:997.70px;top:1837px;font-family:'Liberation Sans', sans-serif;font-size:23.0px;line-height:23.0px;font-weight:400;letter-spacing:-0.886px;color:#fafafa">Kowalski</div>
<div class="t" style="left:1118.20px;top:1837px;font-family:'Liberation Sans', sans-serif;font-size:23.0px;line-height:23.0px;font-weight:400;letter-spacing:-0.547px;color:#fafafa">jankowalski@email.pl</div>
<div class="t" style="left:1350.50px;top:1837px;font-family:'Liberation Sans', sans-serif;font-size:23.0px;line-height:23.0px;font-weight:400;letter-spacing:-0.27px;color:#fafafa">17 lut 2026</div>
<div class="t" style="left:1539.60px;top:1837px;font-family:'Liberation Sans', sans-serif;font-size:23.0px;line-height:23.0px;font-weight:400;letter-spacing:-0.24px;color:#fafafa">18 lut 2026</div>
<div class="t" style="left:1711.80px;top:1837px;font-family:'Liberation Sans', sans-serif;font-size:23.0px;line-height:23.0px;font-weight:400;letter-spacing:-0.35px;color:#fafafa">19 lut 2026</div>
<div class="t" style="left:1891.70px;top:1837px;font-family:'Liberation Sans', sans-serif;font-size:23.0px;line-height:23.0px;font-weight:400;letter-spacing:-0.729px;color:#fafafa">90,00 zł</div>
<div class="t" style="left:1996.00px;top:1837px;font-family:'Liberation Sans', sans-serif;font-size:23.0px;line-height:23.0px;font-weight:400;letter-spacing:-0.625px;color:#fafafa">180,00 zł</div>
<div class="t" style="left:530.70px;top:1897px;font-family:'Liberation Mono', monospace;font-size:18.8px;line-height:18.8px;font-weight:400;letter-spacing:-0.886px;color:#fafafa;-webkit-text-stroke:0.3px #fafafa">f18eb5d8-5c39-4sae-86d1-a5b3f584a19d</div>
<div class="t" style="left:930.30px;top:1895px;font-family:'Liberation Sans', sans-serif;font-size:23.0px;line-height:23.0px;font-weight:400;letter-spacing:-0.547px;color:#fafafa">Jan</div>
<div class="t" style="left:997.70px;top:1895px;font-family:'Liberation Sans', sans-serif;font-size:23.0px;line-height:23.0px;font-weight:400;letter-spacing:-0.886px;color:#fafafa">Kowalski</div>
<div class="t" style="left:1118.20px;top:1895px;font-family:'Liberation Sans', sans-serif;font-size:23.0px;line-height:23.0px;font-weight:400;letter-spacing:-0.547px;color:#fafafa">jankowalski@email.pl</div>
<div class="t" style="left:1350.50px;top:1895px;font-family:'Liberation Sans', sans-serif;font-size:23.0px;line-height:23.0px;font-weight:400;letter-spacing:-0.27px;color:#fafafa">17 lut 2026</div>
<div class="t" style="left:1539.60px;top:1895px;font-family:'Liberation Sans', sans-serif;font-size:23.0px;line-height:23.0px;font-weight:400;letter-spacing:-0.24px;color:#fafafa">18 lut 2026</div>
<div class="t" style="left:1711.80px;top:1895px;font-family:'Liberation Sans', sans-serif;font-size:23.0px;line-height:23.0px;font-weight:400;letter-spacing:-0.35px;color:#fafafa">19 lut 2026</div>
<div class="t" style="left:1891.70px;top:1895px;font-family:'Liberation Sans', sans-serif;font-size:23.0px;line-height:23.0px;font-weight:400;letter-spacing:-0.729px;color:#fafafa">90,00 zł</div>
<div class="t" style="left:1996.00px;top:1895px;font-family:'Liberation Sans', sans-serif;font-size:23.0px;line-height:23.0px;font-weight:400;letter-spacing:-0.625px;color:#fafafa">180,00 zł</div>
<div class="t" style="left:530.70px;top:1954px;font-family:'Liberation Mono', monospace;font-size:18.8px;line-height:18.8px;font-weight:400;letter-spacing:-0.886px;color:#fafafa;-webkit-text-stroke:0.3px #fafafa">f18eb5d8-5c39-4sae-86d1-a5b3f584a19d</div>
<div class="t" style="left:930.30px;top:1952px;font-family:'Liberation Sans', sans-serif;font-size:23.0px;line-height:23.0px;font-weight:400;letter-spacing:-0.547px;color:#fafafa">Jan</div>
<div class="t" style="left:997.70px;top:1952px;font-family:'Liberation Sans', sans-serif;font-size:23.0px;line-height:23.0px;font-weight:400;letter-spacing:-0.886px;color:#fafafa">Kowalski</div>
<div class="t" style="left:1118.20px;top:1952px;font-family:'Liberation Sans', sans-serif;font-size:23.0px;line-height:23.0px;font-weight:400;letter-spacing:-0.547px;color:#fafafa">jankowalski@email.pl</div>
<div class="t" style="left:1350.50px;top:1952px;font-family:'Liberation Sans', sans-serif;font-size:23.0px;line-height:23.0px;font-weight:400;letter-spacing:-0.27px;color:#fafafa">17 lut 2026</div>
<div class="t" style="left:1539.60px;top:1952px;font-family:'Liberation Sans', sans-serif;font-size:23.0px;line-height:23.0px;font-weight:400;letter-spacing:-0.24px;color:#fafafa">18 lut 2026</div>
<div class="t" style="left:1711.80px;top:1952px;font-family:'Liberation Sans', sans-serif;font-size:23.0px;line-height:23.0px;font-weight:400;letter-spacing:-0.35px;color:#fafafa">19 lut 2026</div>
<div class="t" style="left:1891.70px;top:1952px;font-family:'Liberation Sans', sans-serif;font-size:23.0px;line-height:23.0px;font-weight:400;letter-spacing:-0.729px;color:#fafafa">90,00 zł</div>
<div class="t" style="left:1996.00px;top:1952px;font-family:'Liberation Sans', sans-serif;font-size:23.0px;line-height:23.0px;font-weight:400;letter-spacing:-0.625px;color:#fafafa">180,00 zł</div>
<div class="t" style="left:530.70px;top:2012px;font-family:'Liberation Mono', monospace;font-size:18.8px;line-height:18.8px;font-weight:400;letter-spacing:-0.886px;color:#fafafa;-webkit-text-stroke:0.3px #fafafa">f18eb5d8-5c39-4sae-86d1-a5b3f584a19d</div>
<div class="t" style="left:930.30px;top:2010px;font-family:'Liberation Sans', sans-serif;font-size:23.0px;line-height:23.0px;font-weight:400;letter-spacing:-0.547px;color:#fafafa">Jan</div>
<div class="t" style="left:997.70px;top:2010px;font-family:'Liberation Sans', sans-serif;font-size:23.0px;line-height:23.0px;font-weight:400;letter-spacing:-0.886px;color:#fafafa">Kowalski</div>
<div class="t" style="left:1118.20px;top:2010px;font-family:'Liberation Sans', sans-serif;font-size:23.0px;line-height:23.0px;font-weight:400;letter-spacing:-0.547px;color:#fafafa">jankowalski@email.pl</div>
<div class="t" style="left:1350.50px;top:2010px;font-family:'Liberation Sans', sans-serif;font-size:23.0px;line-height:23.0px;font-weight:400;letter-spacing:-0.27px;color:#fafafa">17 lut 2026</div>
<div class="t" style="left:1539.60px;top:2010px;font-family:'Liberation Sans', sans-serif;font-size:23.0px;line-height:23.0px;font-weight:400;letter-spacing:-0.24px;color:#fafafa">18 lut 2026</div>
<div class="t" style="left:1711.80px;top:2010px;font-family:'Liberation Sans', sans-serif;font-size:23.0px;line-height:23.0px;font-weight:400;letter-spacing:-0.35px;color:#fafafa">19 lut 2026</div>
<div class="t" style="left:1891.70px;top:2010px;font-family:'Liberation Sans', sans-serif;font-size:23.0px;line-height:23.0px;font-weight:400;letter-spacing:-0.729px;color:#fafafa">90,00 zł</div>
<div class="t" style="left:1996.00px;top:2010px;font-family:'Liberation Sans', sans-serif;font-size:23.0px;line-height:23.0px;font-weight:400;letter-spacing:-0.625px;color:#fafafa">180,00 zł</div>
<div class="t" style="left:2320.20px;top:2177px;font-family:'Liberation Sans', sans-serif;font-size:22.7px;line-height:22.7px;font-weight:400;letter-spacing:-0.321px;color:#171717;-webkit-text-stroke:0.25px #171717">Nowa rezerwacja</div>
<div class="clipwrap"><div class="t" style="left:1613.30px;top:108.00px;font-family:'Liberation Mono', monospace;font-size:18.8px;line-height:18.8px;font-weight:400;letter-spacing:-0.886px;color:#fafafa;-webkit-text-stroke:0.3px #fafafa">bca19673-c6b4-466f-baa1-6e9dc8f2a7b1</div>
<div class="t" style="left:1613.30px;top:166.00px;font-family:'Liberation Mono', monospace;font-size:18.8px;line-height:18.8px;font-weight:400;letter-spacing:-0.886px;color:#fafafa;-webkit-text-stroke:0.3px #fafafa">bca19673-c6b4-466f-baa1-6e9dc8f2a7b1</div>
<div class="t" style="left:1613.30px;top:224.00px;font-family:'Liberation Mono', monospace;font-size:18.8px;line-height:18.8px;font-weight:400;letter-spacing:-0.886px;color:#fafafa;-webkit-text-stroke:0.3px #fafafa">bca19673-c6b4-466f-baa1-6e9dc8f2a7b1</div>
<div class="t" style="left:1613.30px;top:281.00px;font-family:'Liberation Mono', monospace;font-size:18.8px;line-height:18.8px;font-weight:400;letter-spacing:-0.886px;color:#fafafa;-webkit-text-stroke:0.3px #fafafa">bca19673-c6b4-466f-baa1-6e9dc8f2a7b1</div>
<div class="t" style="left:1613.30px;top:339.00px;font-family:'Liberation Mono', monospace;font-size:18.8px;line-height:18.8px;font-weight:400;letter-spacing:-0.886px;color:#fafafa;-webkit-text-stroke:0.3px #fafafa">bca19673-c6b4-466f-baa1-6e9dc8f2a7b1</div>
<div class="t" style="left:1613.30px;top:397.00px;font-family:'Liberation Mono', monospace;font-size:18.8px;line-height:18.8px;font-weight:400;letter-spacing:-0.886px;color:#fafafa;-webkit-text-stroke:0.3px #fafafa">bca19673-c6b4-466f-baa1-6e9dc8f2a7b1</div>
<div class="t" style="left:1613.30px;top:454.00px;font-family:'Liberation Mono', monospace;font-size:18.8px;line-height:18.8px;font-weight:400;letter-spacing:-0.886px;color:#fafafa;-webkit-text-stroke:0.3px #fafafa">bca19673-c6b4-466f-baa1-6e9dc8f2a7b1</div>
<div class="t" style="left:1613.30px;top:512.00px;font-family:'Liberation Mono', monospace;font-size:18.8px;line-height:18.8px;font-weight:400;letter-spacing:-0.886px;color:#fafafa;-webkit-text-stroke:0.3px #fafafa">bca19673-c6b4-466f-baa1-6e9dc8f2a7b1</div></div>
</body></html>
